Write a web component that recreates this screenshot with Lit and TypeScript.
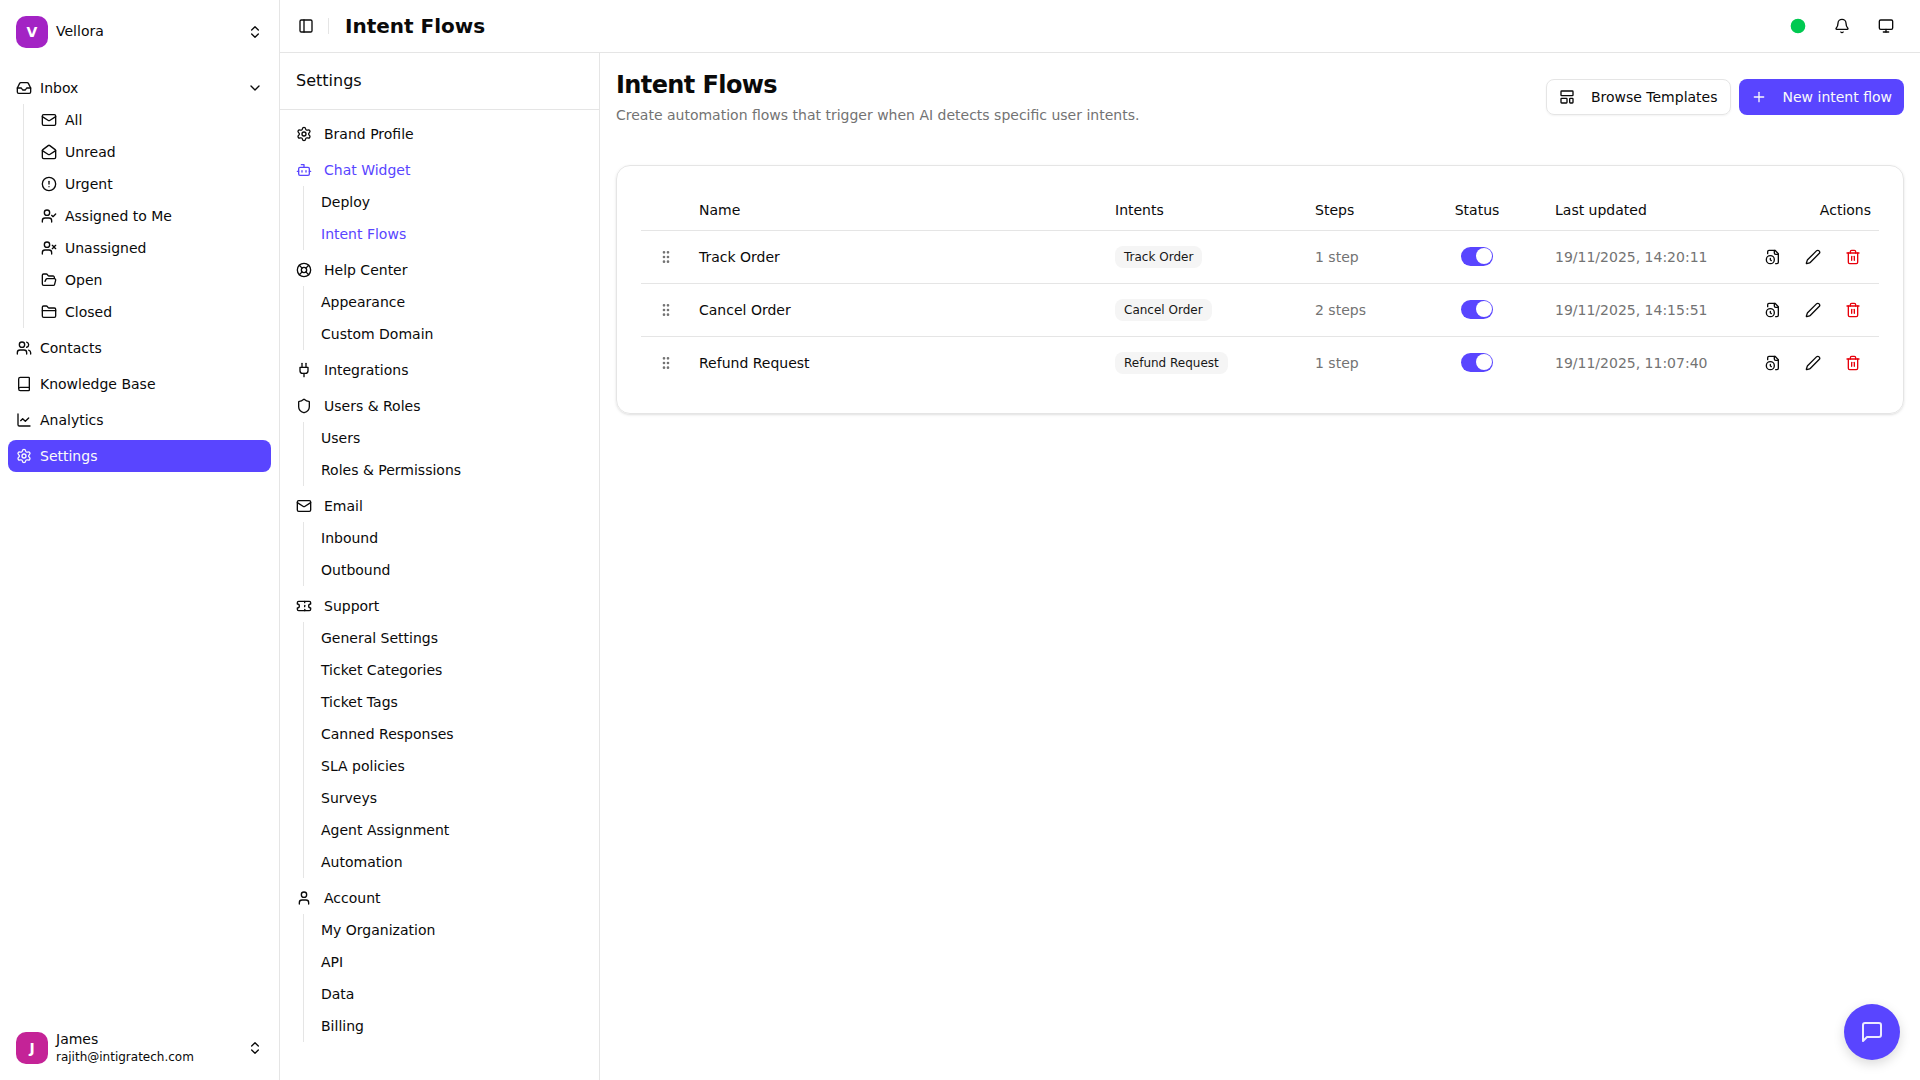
import { LitElement, html, css, svg, nothing } from "lit";
import { customElement, property } from "lit/decorators.js";
import { classMap } from "lit/directives/class-map.js";

const icons: Record<string, unknown> = {
  inbox: svg`<polyline points="22 12 16 12 14 15 10 15 8 12 2 12"/><path d="M5.45 5.11 2 12v6a2 2 0 0 0 2 2h16a2 2 0 0 0 2-2v-6l-3.45-6.89A2 2 0 0 0 16.76 4H7.24a2 2 0 0 0-1.79 1.11z"/>`,
  mail: svg`<path d="m22 7-8.991 5.727a2 2 0 0 1-2.009 0L2 7"/><rect x="2" y="4" width="20" height="16" rx="2"/>`,
  mailOpen: svg`<path d="M21.2 8.4c.5.38.8.97.8 1.6v10a2 2 0 0 1-2 2H4a2 2 0 0 1-2-2V10a2 2 0 0 1 .8-1.6l8-6a2 2 0 0 1 2.4 0l8 6Z"/><path d="m22 10-8.97 5.7a1.94 1.94 0 0 1-2.06 0L2 10"/>`,
  alert: svg`<circle cx="12" cy="12" r="10"/><line x1="12" x2="12" y1="8" y2="12"/><line x1="12" x2="12.01" y1="16" y2="16"/>`,
  userCheck: svg`<path d="m16 11 2 2 4-4"/><path d="M16 21v-2a4 4 0 0 0-4-4H6a4 4 0 0 0-4 4v2"/><circle cx="9" cy="7" r="4"/>`,
  userX: svg`<path d="M16 21v-2a4 4 0 0 0-4-4H6a4 4 0 0 0-4 4v2"/><circle cx="9" cy="7" r="4"/><line x1="17" x2="22" y1="8" y2="13"/><line x1="22" x2="17" y1="8" y2="13"/>`,
  folderOpen: svg`<path d="m6 14 1.5-2.9A2 2 0 0 1 9.24 10H20a2 2 0 0 1 1.94 2.5l-1.54 6a2 2 0 0 1-1.95 1.5H4a2 2 0 0 1-2-2V5a2 2 0 0 1 2-2h3.9a2 2 0 0 1 1.69.9l.81 1.2a2 2 0 0 0 1.67.9H18a2 2 0 0 1 2 2v2"/>`,
  folder: svg`<path d="M20 20a2 2 0 0 0 2-2V8a2 2 0 0 0-2-2h-7.9a2 2 0 0 1-1.69-.9L9.6 3.9A2 2 0 0 0 7.93 3H4a2 2 0 0 0-2 2v13a2 2 0 0 0 2 2Z"/><path d="M2 10h20"/>`,
  users: svg`<path d="M16 21v-2a4 4 0 0 0-4-4H6a4 4 0 0 0-4 4v2"/><path d="M16 3.128a4 4 0 0 1 0 7.744"/><path d="M22 21v-2a4 4 0 0 0-3-3.87"/><circle cx="9" cy="7" r="4"/>`,
  book: svg`<path d="M4 19.5v-15A2.5 2.5 0 0 1 6.5 2H19a1 1 0 0 1 1 1v18a1 1 0 0 1-1 1H6.5a1 1 0 0 1 0-5H20"/>`,
  chart: svg`<path d="M3 3v16a2 2 0 0 0 2 2h16"/><path d="m19 9-5 5-4-4-3 3"/>`,
  settings: svg`<path d="M9.671 4.136a2.34 2.34 0 0 1 4.659 0 2.34 2.34 0 0 0 3.319 1.915 2.34 2.34 0 0 1 2.33 4.033 2.34 2.34 0 0 0 0 3.831 2.34 2.34 0 0 1-2.33 4.033 2.34 2.34 0 0 0-3.319 1.915 2.34 2.34 0 0 1-4.659 0 2.34 2.34 0 0 0-3.32-1.915 2.34 2.34 0 0 1-2.33-4.033 2.34 2.34 0 0 0 0-3.831A2.34 2.34 0 0 1 6.35 6.051a2.34 2.34 0 0 0 3.319-1.915"/><circle cx="12" cy="12" r="3"/>`,
  bot: svg`<path d="M12 8V4H8"/><rect width="16" height="12" x="4" y="8" rx="2"/><path d="M2 14h2"/><path d="M20 14h2"/><path d="M15 13v2"/><path d="M9 13v2"/>`,
  lifeBuoy: svg`<circle cx="12" cy="12" r="10"/><path d="m4.93 4.93 4.24 4.24"/><path d="m14.83 9.17 4.24-4.24"/><path d="m14.83 14.83 4.24 4.24"/><path d="m9.17 14.83-4.24 4.24"/><circle cx="12" cy="12" r="4"/>`,
  plug: svg`<path d="M12 22v-5"/><path d="M9 8V2"/><path d="M15 8V2"/><path d="M18 8v5a4 4 0 0 1-4 4h-4a4 4 0 0 1-4-4V8Z"/>`,
  shield: svg`<path d="M20 13c0 5-3.5 7.5-7.66 8.95a1 1 0 0 1-.67-.01C7.5 20.5 4 18 4 13V6a1 1 0 0 1 1-1c2 0 4.5-1.2 6.24-2.72a1.17 1.17 0 0 1 1.52 0C14.51 3.81 17 5 19 5a1 1 0 0 1 1 1z"/>`,
  ticket: svg`<path d="M2 9a3 3 0 0 1 0 6v2a2 2 0 0 0 2 2h16a2 2 0 0 0 2-2v-2a3 3 0 0 1 0-6V7a2 2 0 0 0-2-2H4a2 2 0 0 0-2 2Z"/><path d="M13 5v2"/><path d="M13 17v2"/><path d="M13 11v2"/>`,
  user: svg`<path d="M19 21v-2a4 4 0 0 0-4-4H9a4 4 0 0 0-4 4v2"/><circle cx="12" cy="7" r="4"/>`,
  bell: svg`<path d="M10.268 21a2 2 0 0 0 3.464 0"/><path d="M3.262 15.326A1 1 0 0 0 4 17h16a1 1 0 0 0 .74-1.673C19.41 13.956 18 12.499 18 8A6 6 0 0 0 6 8c0 4.499-1.411 5.956-2.738 7.326"/>`,
  monitor: svg`<rect width="20" height="14" x="2" y="3" rx="2"/><line x1="8" x2="16" y1="21" y2="21"/><line x1="12" x2="12" y1="17" y2="21"/>`,
  panel: svg`<rect width="18" height="18" x="3" y="3" rx="2"/><path d="M9 3v18"/>`,
  template: svg`<rect width="18" height="7" x="3" y="3" rx="1"/><rect width="9" height="7" x="3" y="14" rx="1"/><rect width="5" height="7" x="16" y="14" rx="1"/>`,
  plus: svg`<path d="M5 12h14"/><path d="M12 5v14"/>`,
  history: svg`<path d="M16 22h2a2 2 0 0 0 2-2V7l-5-5H6a2 2 0 0 0-2 2v3"/><path d="M14 2v4a2 2 0 0 0 2 2h4"/><circle cx="8" cy="16" r="6"/><path d="M9.5 17.5 8 16.25V14"/>`,
  pencil: svg`<path d="M21.174 6.812a1 1 0 0 0-3.986-3.987L3.842 16.174a2 2 0 0 0-.5.83l-1.321 4.352a.5.5 0 0 0 .623.622l4.353-1.32a2 2 0 0 0 .83-.497z"/>`,
  trash: svg`<path d="M3 6h18"/><path d="M19 6v14c0 1-1 2-2 2H7c-1 0-2-1-2-2V6"/><path d="M8 6V4c0-1 1-2 2-2h4c1 0 2 1 2 2v2"/><line x1="10" x2="10" y1="11" y2="17"/><line x1="14" x2="14" y1="11" y2="17"/>`,
  grip: svg`<circle cx="9" cy="12" r="1"/><circle cx="9" cy="5" r="1"/><circle cx="9" cy="19" r="1"/><circle cx="15" cy="12" r="1"/><circle cx="15" cy="5" r="1"/><circle cx="15" cy="19" r="1"/>`,
  chevronDown: svg`<path d="m6 9 6 6 6-6"/>`,
  chevrons: svg`<path d="m7 15 5 5 5-5"/><path d="m7 9 5-5 5 5"/>`,
  online: svg`<circle cx="12" cy="12" r="10" fill="currentColor"/>`,
  message: svg`<path d="M21 15a2 2 0 0 1-2 2H7l-4 4V5a2 2 0 0 1 2-2h14a2 2 0 0 1 2 2z"/>`,
};

@customElement("ui-icon")
export class UiIcon extends LitElement {
  static styles = css`
    :host { display: block; width: 16px; height: 16px; flex: none; }
    .glyph { display: block; width: 100%; height: 100%; }
  `;
  @property() name = "";
  render() {
    return html`<svg class="glyph" viewBox="0 0 24 24" fill="none" stroke="currentColor" stroke-width="2"
      stroke-linecap="round" stroke-linejoin="round">${icons[this.name]}</svg>`;
  }
}

interface NavItem {
  label: string;
  icon?: string;
  active?: boolean;
  expandable?: boolean;
  children?: NavItem[];
}

const mainNav: NavItem[] = [
  {
    label: "Inbox", icon: "inbox", expandable: true,
    children: [
      { label: "All", icon: "mail" },
      { label: "Unread", icon: "mailOpen" },
      { label: "Urgent", icon: "alert" },
      { label: "Assigned to Me", icon: "userCheck" },
      { label: "Unassigned", icon: "userX" },
      { label: "Open", icon: "folderOpen" },
      { label: "Closed", icon: "folder" },
    ],
  },
  { label: "Contacts", icon: "users" },
  { label: "Knowledge Base", icon: "book" },
  { label: "Analytics", icon: "chart" },
  { label: "Settings", icon: "settings", active: true },
];

const settingsNav: NavItem[] = [
  { label: "Brand Profile", icon: "settings" },
  {
    label: "Chat Widget", icon: "bot", active: true,
    children: [{ label: "Deploy" }, { label: "Intent Flows", active: true }],
  },
  { label: "Help Center", icon: "lifeBuoy", children: [{ label: "Appearance" }, { label: "Custom Domain" }] },
  { label: "Integrations", icon: "plug" },
  { label: "Users & Roles", icon: "shield", children: [{ label: "Users" }, { label: "Roles & Permissions" }] },
  { label: "Email", icon: "mail", children: [{ label: "Inbound" }, { label: "Outbound" }] },
  {
    label: "Support", icon: "ticket",
    children: [
      { label: "General Settings" }, { label: "Ticket Categories" }, { label: "Ticket Tags" },
      { label: "Canned Responses" }, { label: "SLA policies" }, { label: "Surveys" },
      { label: "Agent Assignment" }, { label: "Automation" },
    ],
  },
  {
    label: "Account", icon: "user",
    children: [{ label: "My Organization" }, { label: "API" }, { label: "Data" }, { label: "Billing" }],
  },
];

const flows = [
  { name: "Track Order", intent: "Track Order", steps: "1 step", updated: "19/11/2025, 14:20:11" },
  { name: "Cancel Order", intent: "Cancel Order", steps: "2 steps", updated: "19/11/2025, 14:15:51" },
  { name: "Refund Request", intent: "Refund Request", steps: "1 step", updated: "19/11/2025, 11:07:40" },
];

@customElement("nav-list")
export class NavList extends LitElement {
  static styles = css`
    :host { display: block; }
    .list { display: flex; flex-direction: column; gap: 4px; }
    .item { display: flex; align-items: center; gap: 8px; height: 32px; padding: 0 8px; border-radius: 8px; box-sizing: border-box; white-space: nowrap; }
    .grow { flex: 1; }
    .group { display: flex; flex-direction: column; }
    .sub { margin: 0 14px 0 15px; padding: 0 8px 0 9px; border-left: 1px solid #e5e5e5; }
    .filled .item.active { background: #5945ff; color: #fafafa; }
    .plain .group > .item { gap: 12px; }
    .plain .active { color: #5945ff; }
  `;
  @property({ attribute: false }) items: NavItem[] = [];
  @property() variant = "plain";

  private row(item: NavItem) {
    return html`<div class=${classMap({ item: true, active: !!item.active })}>
      ${item.icon ? html`<ui-icon .name=${item.icon}></ui-icon>` : nothing}
      <span class="grow">${item.label}</span>
      ${item.expandable ? html`<ui-icon name="chevronDown"></ui-icon>` : nothing}
    </div>`;
  }

  render() {
    return html`<nav class="list ${this.variant}">
      ${this.items.map((item) => html`<div class="group">
        ${this.row(item)}
        ${item.children ? html`<div class="sub">${item.children.map((c) => this.row(c))}</div>` : nothing}
      </div>`)}
    </nav>`;
  }
}

@customElement("flow-table")
export class FlowTable extends LitElement {
  static styles = css`
    :host { display: block; }
    .table { width: 100%; border-collapse: separate; border-spacing: 0; table-layout: fixed; font-size: 14px; line-height: 20px; }
    .head { height: 40px; padding: 0 8px; text-align: left; font-weight: 400; vertical-align: middle; border-bottom: 1px solid #e5e5e5; }
    .cell { padding: 8px; vertical-align: middle; border-bottom: 1px solid #e5e5e5; white-space: nowrap; }
    .row:last-child .cell { border-bottom: 0; }
    .muted { color: #737373; }
    .center { text-align: center; }
    .right { text-align: right; }
    .c-grip { width: 50px; }
    .c-name { width: 416px; }
    .c-intent { width: 200px; }
    .c-steps { width: 100px; }
    .c-status { width: 140px; }
    .c-updated { width: 180px; }
    .grip { display: flex; justify-content: center; color: #737373; }
    .badges { display: flex; }
    .badge { display: block; border: 1px solid transparent; padding: 2px 8px; border-radius: 8px; background: #f5f5f5; color: #171717; font-size: 12px; line-height: 16px; }
    .status { display: flex; justify-content: center; padding-bottom: 1px; }
    .switch { display: flex; align-items: center; justify-content: flex-end; box-sizing: border-box; width: 32px; height: 18.4px; padding: 0 1px; border-radius: 999px; background: #5945ff; }
    .thumb { width: 16px; height: 16px; border-radius: 50%; background: #fff; }
    .actions { display: flex; justify-content: flex-end; gap: 4px; }
    .action { display: flex; align-items: center; justify-content: center; width: 36px; height: 36px; }
    .danger { color: #e7000b; }
  `;
  render() {
    return html`<table class="table">
      <colgroup>
        <col class="c-grip"><col class="c-name"><col class="c-intent"><col class="c-steps">
        <col class="c-status"><col class="c-updated"><col>
      </colgroup>
      <thead><tr>
        <th class="head"></th><th class="head">Name</th><th class="head">Intents</th><th class="head">Steps</th>
        <th class="head center">Status</th><th class="head">Last updated</th><th class="head right">Actions</th>
      </tr></thead>
      <tbody>
        ${flows.map((f) => html`<tr class="row">
          <td class="cell"><div class="grip"><ui-icon name="grip"></ui-icon></div></td>
          <td class="cell">${f.name}</td>
          <td class="cell"><div class="badges"><span class="badge">${f.intent}</span></div></td>
          <td class="cell muted">${f.steps}</td>
          <td class="cell"><div class="status"><span class="switch"><span class="thumb"></span></span></div></td>
          <td class="cell muted">${f.updated}</td>
          <td class="cell"><div class="actions">
            <span class="action"><ui-icon name="history"></ui-icon></span>
            <span class="action"><ui-icon name="pencil"></ui-icon></span>
            <span class="action danger"><ui-icon name="trash"></ui-icon></span>
          </div></td>
        </tr>`)}
      </tbody>
    </table>`;
  }
}

@customElement("app-root")
export class AppRoot extends LitElement {
  static styles = css`
    :host { display: block; height: 100vh; background: #fff; color: #0a0a0a; font-family: "DejaVu Sans", sans-serif; font-size: 14px; line-height: 20px; }
    .app { display: grid; grid-template-columns: 280px 1fr; height: 100%; overflow: hidden; }
    .sidebar { display: flex; flex-direction: column; border-right: 1px solid #e5e5e5; padding: 8px; box-sizing: border-box; }
    .account { display: flex; align-items: center; gap: 8px; height: 48px; padding: 0 8px; }
    .avatar { display: flex; align-items: center; justify-content: center; width: 32px; height: 32px; border-radius: 10px; color: #fff; font-weight: 700; }
    .violet { background: #a323c4; }
    .magenta { background: #c42397; }
    .who { flex: 1; display: flex; flex-direction: column; line-height: 17.5px; }
    .mail { font-size: 12px; line-height: 16px; }
    .main-nav { flex: 1; padding-top: 16px; }
    .page { display: flex; flex-direction: column; min-width: 0; }
    .topbar { display: flex; align-items: center; height: 52px; border-bottom: 1px solid #e5e5e5; padding: 0 16px 0 12px; }
    .trigger { display: flex; align-items: center; justify-content: center; width: 28px; height: 28px; }
    .divider { width: 1px; height: 16px; background: #e5e5e5; margin: 0 16px 0 8px; }
    .crumb { flex: 1; margin: 0; font-size: 20px; line-height: 28px; font-weight: 700; }
    .tools { display: flex; gap: 8px; }
    .tool { display: flex; align-items: center; justify-content: center; width: 36px; height: 36px; }
    .online { color: #00c951; }
    .body { flex: 1; display: grid; grid-template-columns: 320px 1fr; min-height: 0; }
    .settings { border-right: 1px solid #e5e5e5; }
    .settings-head { display: flex; align-items: center; height: 56px; padding: 0 16px; border-bottom: 1px solid #e5e5e5; font-size: 16px; line-height: 24px; }
    .settings-nav { padding: 8px; }
    .content { display: flex; flex-direction: column; gap: 40px; padding: 16px; min-width: 0; }
    .intro { display: flex; align-items: center; justify-content: space-between; }
    .title { margin: 0 0 4px; font-size: 24px; line-height: 32px; font-weight: 700; letter-spacing: -0.6px; }
    .desc { margin: 0; color: #737373; }
    .buttons { display: flex; gap: 8px; }
    .button { display: flex; align-items: center; gap: 16px; height: 36px; box-sizing: border-box; padding: 0 12px; border-radius: 8px; white-space: nowrap; }
    .outline { border: 1px solid #e5e5e5; box-shadow: 0 1px 2px 0 rgb(0 0 0 / 0.05); }
    .primary { background: #5945ff; color: #fafafa; }
    .card { border: 1px solid #e5e5e5; border-radius: 14px; padding: 24px; box-shadow: 0 1px 3px 0 rgb(0 0 0 / 0.1), 0 1px 2px -1px rgb(0 0 0 / 0.1); }
    .fab { position: absolute; right: 20px; bottom: 20px; width: 56px; height: 56px; border-radius: 50%; background: #5945ff; color: #eceaff; display: flex; align-items: center; justify-content: center; box-shadow: 0 4px 12px rgb(0 0 0 / 0.15); }
    .fab-icon { width: 24px; height: 24px; }
  `;
  render() {
    return html`<div class="app">
      <aside class="sidebar">
        <div class="account">
          <span class="avatar violet">V</span>
          <div class="who"><span>Vellora</span></div>
          <ui-icon name="chevrons"></ui-icon>
        </div>
        <div class="main-nav"><nav-list variant="filled" .items=${mainNav}></nav-list></div>
        <div class="account">
          <span class="avatar magenta">J</span>
          <div class="who"><span>James</span><span class="mail">rajith@intigratech.com</span></div>
          <ui-icon name="chevrons"></ui-icon>
        </div>
      </aside>
      <div class="page">
        <header class="topbar">
          <span class="trigger"><ui-icon name="panel"></ui-icon></span>
          <span class="divider"></span>
          <h1 class="crumb">Intent Flows</h1>
          <div class="tools">
            <span class="tool online"><ui-icon name="online"></ui-icon></span>
            <span class="tool"><ui-icon name="bell"></ui-icon></span>
            <span class="tool"><ui-icon name="monitor"></ui-icon></span>
          </div>
        </header>
        <div class="body">
          <section class="settings">
            <div class="settings-head">Settings</div>
            <div class="settings-nav"><nav-list .items=${settingsNav}></nav-list></div>
          </section>
          <main class="content">
            <div class="intro">
              <div>
                <h2 class="title">Intent Flows</h2>
                <p class="desc">Create automation flows that trigger when AI detects specific user intents.</p>
              </div>
              <div class="buttons">
                <span class="button outline"><ui-icon name="template"></ui-icon>Browse Templates</span>
                <span class="button primary"><ui-icon name="plus"></ui-icon>New intent flow</span>
              </div>
            </div>
            <div class="card"><flow-table></flow-table></div>
          </main>
        </div>
      </div>
      <span class="fab"><ui-icon class="fab-icon" name="message"></ui-icon></span>
    </div>`;
  }
}
